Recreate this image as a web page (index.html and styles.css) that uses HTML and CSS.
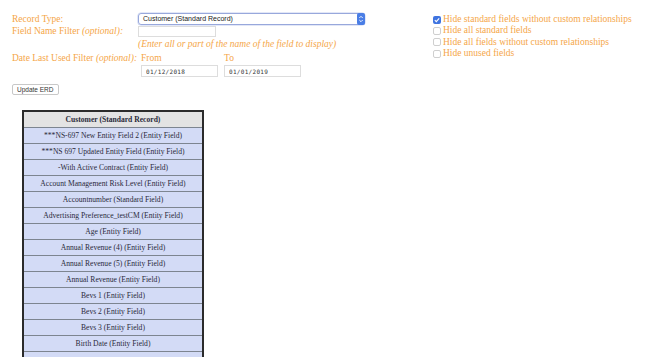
FILE: index.html
```html
<!DOCTYPE html>
<html>
<head>
	<meta charset="utf-8">
	<link rel="stylesheet" href="styles.css">
	<title>ERD</title>
</head>
<body>
	<div class="top">
		<div class="filters">
			<div class="form-grid">
				<label class="lbl">Record Type:</label>
				<div class="select">Customer (Standard Record)
					<span class="arrows">
						<svg width="8" height="12" viewBox="0 0 8 12">
							<rect width="8" height="12" rx="2" fill="#4a7ee6"/>
							<path d="M2.3 5 L4 3.3 L5.7 5 M2.3 7 L4 8.7 L5.7 7" fill="none" stroke="#fff" stroke-width="0.9"/>
						</svg>
					</span>
				</div>

				<label class="lbl">Field Name Filter <i>(optional):</i></label>
				<div><input type="text" class="name-input"></div>

				<div></div>
				<div class="hint">(Enter all or part of the name of the field to display)</div>

				<label class="lbl date-lbl">Date Last Used Filter <i>(optional):</i></label>
				<div class="dates">
					<div class="date-col">
						<span class="lbl">From</span>
						<input type="text" class="date-input" value="01/12/2018">
					</div>
					<div class="date-col">
						<span class="lbl">To</span>
						<input type="text" class="date-input" value="01/01/2019">
					</div>
				</div>
			</div>
			<button class="btn">Update ERD</button>
		</div>
		<div class="options">
			<label class="opt">
				<span class="box checked">
					<svg width="8" height="8" viewBox="0 0 8 8"><path d="M1.8 4.2 L3.3 5.7 L6.2 2.3" fill="none" stroke="#fff" stroke-width="1.1"/></svg>
				</span>Hide standard fields without custom relationships
			</label>
			<label class="opt"><span class="box"></span>Hide all standard fields</label>
			<label class="opt"><span class="box"></span>Hide all fields without custom relationships</label>
			<label class="opt"><span class="box"></span>Hide unused fields</label>
		</div>
	</div>

	<table class="erd">
		<tr><th>Customer (Standard Record)</th></tr>
		<tr><td>***NS-697 New Entity Field 2 (Entity Field)</td></tr>
		<tr><td>***NS 697 Updated Entity Field (Entity Field)</td></tr>
		<tr><td>-With Active Contract (Entity Field)</td></tr>
		<tr><td>Account Management Risk Level (Entity Field)</td></tr>
		<tr><td>Accountnumber (Standard Field)</td></tr>
		<tr><td>Advertising Preference_testCM (Entity Field)</td></tr>
		<tr><td>Age (Entity Field)</td></tr>
		<tr><td>Annual Revenue (4) (Entity Field)</td></tr>
		<tr><td>Annual Revenue (5) (Entity Field)</td></tr>
		<tr><td>Annual Revenue (Entity Field)</td></tr>
		<tr><td>Bevs 1 (Entity Field)</td></tr>
		<tr><td>Bevs 2 (Entity Field)</td></tr>
		<tr><td>Bevs 3 (Entity Field)</td></tr>
		<tr><td>Birth Date (Entity Field)</td></tr>
		<tr class="cut"><td></td></tr>
	</table>
</body>
</html>
```

FILE: styles.css
```css
html, body {
	margin: 0;
	height: 357px;
	overflow: hidden;
	background: #fff;
}
body {
	font-family: "Liberation Serif", "Times New Roman", serif;
	font-size: 9.5px;
	color: #f5a648;
	padding: 13px 0 0 12px;
	box-sizing: border-box;
}
.top {
	display: flex;
}
.filters {
	width: 421px;
}
.form-grid {
	display: grid;
	grid-template-columns: 126px auto;
}
.lbl {
	line-height: 12px;
}
.date-lbl {
	margin-top: 2px;
}
.select {
	position: relative;
	width: 221px;
	height: 10px;
	border: 1px solid #98a8dc;
	border-radius: 3px;
	font-family: "Liberation Sans", Arial, sans-serif;
	font-size: 7px;
	line-height: 10px;
	color: #222;
	padding-left: 4px;
	box-shadow: 0 0 0 0.5px #c5d0f0;
}
.arrows {
	position: absolute;
	right: -1px;
	top: -1px;
	line-height: 0;
}
.name-input {
	display: block;
	width: 78px;
	height: 11px;
	margin: 1px 0 0;
	padding: 0;
	border: 1px solid #ddd;
	box-sizing: border-box;
}
.hint {
	font-style: italic;
	line-height: 12px;
	margin-top: 1px;
}
.dates {
	display: flex;
	gap: 6px;
	margin: 2px 0 0 3px;
}
.date-col {
	display: flex;
	flex-direction: column;
}
.date-input {
	width: 77px;
	height: 12px;
	margin: 1px 0 0;
	padding: 0 0 0 4px;
	border: 1px solid #ddd;
	box-sizing: border-box;
	font-family: "DejaVu Sans Mono", monospace;
	font-size: 6px;
	letter-spacing: 0.3px;
	color: #333;
}
.btn {
	display: block;
	margin-top: 7px;
	height: 11px;
	padding: 0 4px;
	font-family: "Liberation Sans", Arial, sans-serif;
	font-size: 6.5px;
	line-height: 9px;
	color: #333;
	background: #fff;
	border: 1px solid #c8c8c8;
	border-radius: 2px;
}
.options {
	display: flex;
	flex-direction: column;
	margin-top: 1px;
}
.opt {
	display: flex;
	align-items: center;
	line-height: 11.3px;
}
.box {
	width: 8px;
	height: 8px;
	margin-right: 2px;
	border: 1px solid #cfcfcf;
	border-radius: 2px;
	box-sizing: border-box;
	background: #fff;
	line-height: 0;
}
.box.checked {
	border: none;
	background: #3f74e0;
}
.erd {
	margin: 15px 0 0 10px;
	width: 182px;
	border-collapse: collapse;
	border: 2px solid #2b2b2b;
	font-size: 7.6px;
	color: #2a2a3a;
}
.erd th, .erd td {
	height: 15px;
	padding: 0;
	text-align: center;
	border: 1px solid #7d8590;
}
.erd th {
	background: #e3e3e3;
	font-weight: bold;
}
.erd td {
	background: #d3dbf6;
}
```
